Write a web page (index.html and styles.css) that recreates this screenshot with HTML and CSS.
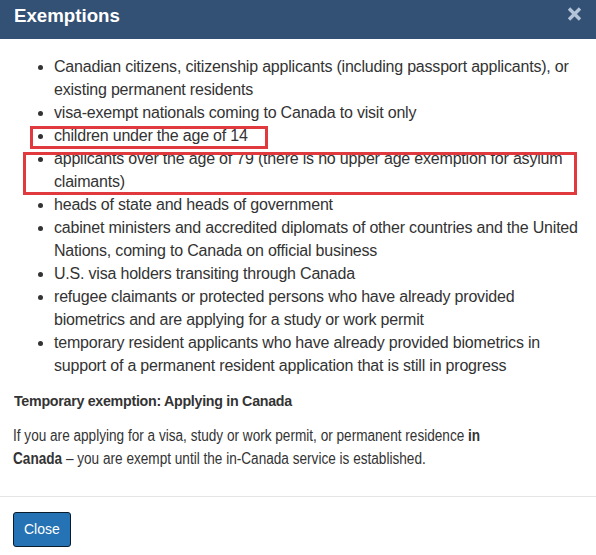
FILE: index.html
```html
<!DOCTYPE html>
<html lang="en">
<head>
<meta charset="utf-8">
<title>Exemptions</title>
<link rel="stylesheet" href="styles.css">
</head>
<body>
<div class="modal">
  <header class="modal-header">
    <h2 class="modal-title">Exemptions</h2>
    <button class="modal-x" type="button" aria-label="Close">
      <svg width="15" height="14" viewBox="0 0 15 14" aria-hidden="true">
        <path d="M2 1.5 L13 12.5 M13 1.5 L2 12.5" stroke="#b3c4d8" stroke-width="3.4" fill="none"/>
      </svg>
    </button>
  </header>
  <div class="modal-body">
    <ul class="list">
      <li>Canadian citizens, citizenship applicants (including passport applicants), or existing permanent residents</li>
      <li>visa-exempt nationals coming to Canada to visit only</li>
      <li>children under the age of 14</li>
      <li>applicants over the age of 79 (there is no upper age exemption for asylum claimants)</li>
      <li>heads of state and heads of government</li>
      <li>cabinet ministers and accredited diplomats of other countries and the United Nations, coming to Canada on official business</li>
      <li>U.S. visa holders transiting through Canada</li>
      <li>refugee claimants or protected persons who have already provided biometrics and are applying for a study or work permit</li>
      <li>temporary resident applicants who have already provided biometrics in support of a permanent resident application that is still in progress</li>
    </ul>
    <h3 class="sub">Temporary exemption: Applying in Canada</h3>
    <p class="para">If you are applying for a visa, study or work permit, or permanent residence <strong>in Canada</strong> – you are exempt until the in-Canada service is established.</p>
  </div>
  <footer class="modal-footer">
    <button class="btn" type="button">Close</button>
  </footer>
  <div class="mark mark-1"></div>
  <div class="mark mark-2"></div>
</div>
</body>
</html>
```
FILE: styles.css
```css
html, body {
  margin: 0;
  padding: 0;
  background: #ffffff;
}
body {
  font-family: "Liberation Sans", Arial, Helvetica, sans-serif;
  color: #333333;
  font-size: 16px;
  line-height: 23px;
}
.modal {
  position: relative;
  width: 596px;
  height: 555px;
  overflow: hidden;
}
.modal-header {
  background: #335075;
  height: 39px;
  display: flex;
  align-items: center;
  justify-content: space-between;
  padding: 0 14px 0 14px;
  box-sizing: border-box;
}
.modal-title {
  margin: -7px 0 0 0;
  color: #ffffff;
  font-size: 18.7px;
  font-weight: bold;
  line-height: 22px;
}
.modal-x {
  background: none;
  border: 0;
  padding: 0;
  display: flex;
  margin-top: -11px;
}
.modal-body {
  padding: 16px 15px 15px 15px;
}
.list {
  margin: 0;
  padding-left: 39px;
  letter-spacing: -0.2px;
}
.sub {
  margin: 15px 0 15px -1px;
  font-size: 15px;
  line-height: 17px;
  font-weight: bold;
  color: #333333;
  letter-spacing: -0.3px;
  transform: scaleX(0.95);
  transform-origin: left center;
}
.para {
  margin: 0 0 11px -2px;
  width: 560px;
  transform: scaleX(0.85);
  transform-origin: left top;
}
.para strong {
  font-weight: bold;
}
.modal-footer {
  border-top: 1px solid #e5e5e5;
  padding: 15px 13px;
}
.btn {
  font-family: "Liberation Sans", Arial, sans-serif;
  font-size: 14px;
  line-height: 21px;
  color: #ffffff;
  background: #2572b4;
  border: 1px solid #091c2d;
  border-radius: 3px;
  padding: 6px 10px;
}
.mark {
  position: absolute;
  border: 3px solid #e0393e;
  box-sizing: border-box;
}
.mark-1 {
  left: 30px;
  top: 126px;
  width: 238px;
  height: 23px;
}
.mark-2 {
  left: 23px;
  top: 152px;
  width: 554px;
  height: 43px;
}
```
